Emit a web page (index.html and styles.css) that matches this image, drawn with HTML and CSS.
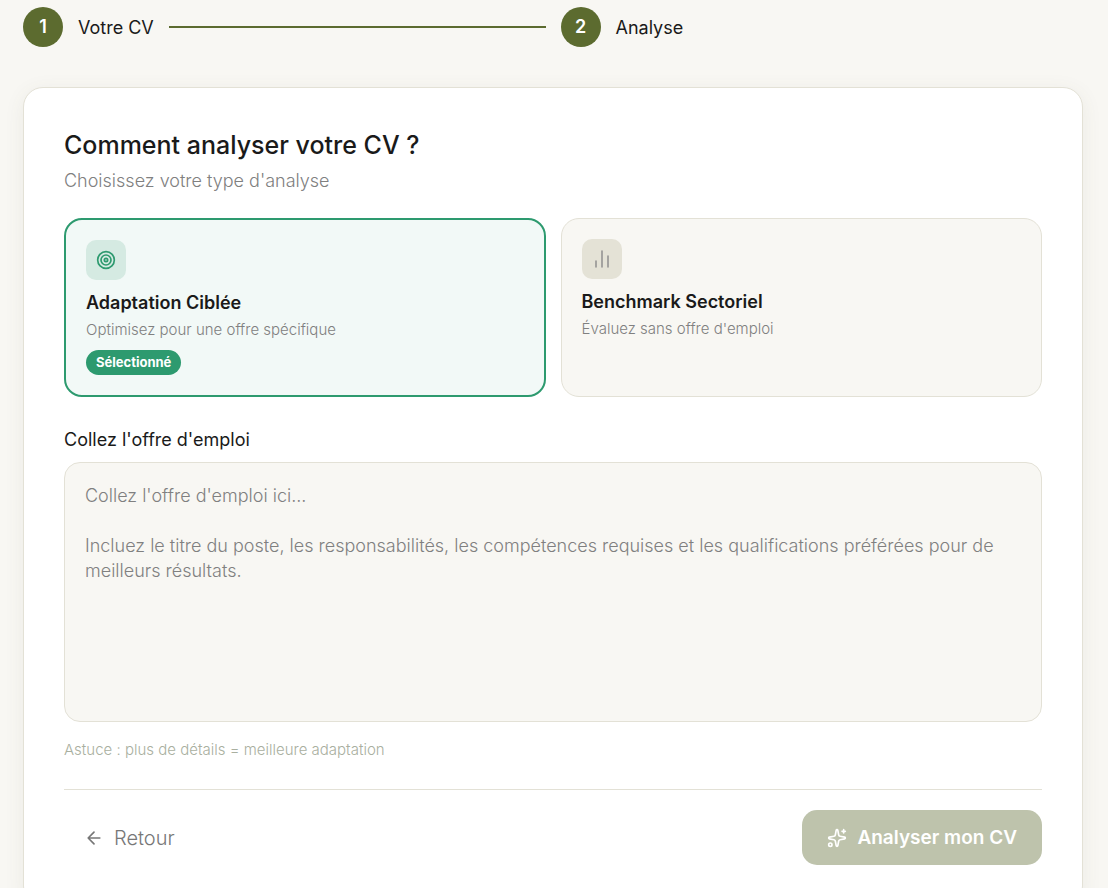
FILE: index.html
```html
<!DOCTYPE html>
<html lang="fr">
<head>
    <meta charset="UTF-8">
    <meta name="viewport" content="width=device-width, initial-scale=1.0"/>
    <title>Analyse de CV</title>
    <link rel="stylesheet" href="styles.css">
</head>
<body>
<main class="page">
    <ol class="steps">
        <li class="step">
            <span class="stepNum">1</span>
            <span>Votre CV</span>
            <i class="stepLine"></i>
        </li>
        <li class="step">
            <span class="stepNum">2</span>
            <span>Analyse</span>
        </li>
    </ol>

    <form class="panel">
        <h1>Comment analyser votre CV ?</h1>
        <p class="subtitle">Choisissez votre type d'analyse</p>

        <div class="modes">
            <button type="button" class="mode selected" aria-pressed="true">
                <span class="modeIcon">
                    <svg width="20" height="20" viewBox="0 0 24 24">
                        <circle cx="12" cy="12" r="10"/>
                        <circle cx="12" cy="12" r="6"/>
                        <circle cx="12" cy="12" r="2"/>
                    </svg>
                </span>
                <span class="modeTitle">Adaptation Ciblée</span>
                <span class="modeText">Optimisez pour une offre spécifique</span>
                <span class="badge">Sélectionné</span>
            </button>
            <button type="button" class="mode" aria-pressed="false">
                <span class="modeIcon">
                    <svg class="chart" width="24" height="24" viewBox="0 0 24 24">
                        <path d="M6 20v-6M12 20V4M18 20V9"/>
                    </svg>
                </span>
                <span class="modeTitle">Benchmark Sectoriel</span>
                <span class="modeText">Évaluez sans offre d'emploi</span>
            </button>
        </div>

        <label class="label" for="offer">Collez l'offre d'emploi</label>
        <textarea id="offer" class="offer" placeholder="Collez l'offre d'emploi ici...&#10;&#10;Incluez le titre du poste, les responsabilités, les compétences requises et les qualifications préférées pour de meilleurs résultats."></textarea>
        <p class="hint">Astuce : plus de détails = meilleure adaptation</p>

        <div class="actions">
            <button type="button" class="btn back">
                <svg width="20" height="20" viewBox="0 0 24 24">
                    <path d="m12 19-7-7 7-7M19 12H5"/>
                </svg>
                Retour
            </button>
            <button type="submit" class="btn submit" disabled>
                <svg width="20" height="20" viewBox="0 0 24 24">
                    <path d="M11.017 2.814a1 1 0 0 1 1.966 0l1.051 5.558a2 2 0 0 0 1.594 1.594l5.558 1.051a1 1 0 0 1 0 1.966l-5.558 1.051a2 2 0 0 0-1.594 1.594l-1.051 5.558a1 1 0 0 1-1.966 0l-1.051-5.558a2 2 0 0 0-1.594-1.594l-5.558-1.051a1 1 0 0 1 0-1.966l5.558-1.051a2 2 0 0 0 1.594-1.594z"/>
                    <path d="M20 2v4M22 4h-4"/>
                    <circle cx="4" cy="20" r="2"/>
                </svg>
                Analyser mon CV
            </button>
        </div>
    </form>
</main>
</body>
</html>
```
FILE: styles.css
```css
* {
    margin: 0;
    padding: 0;
    box-sizing: border-box;
}

body {
    background: #f8f7f3;
    color: #1a1a1a;
    font-family: Inter, "Liberation Sans", sans-serif;
    font-size: 18px;
    line-height: 25px;
}

button, textarea {
    font-family: inherit;
    color: inherit;
}

svg {
    flex: none;
    fill: none;
    stroke: currentColor;
    stroke-width: 2;
    stroke-linecap: round;
    stroke-linejoin: round;
}

.page {
    padding: 7px 25px 40px 23px;
}

/* steps */
.steps {
    display: grid;
    grid-template-columns: 1fr 1fr;
    gap: 15px;
    margin-bottom: 40px;
    list-style: none;
}

.step {
    display: flex;
    align-items: center;
    gap: 15px;
}

.stepNum {
    width: 40px;
    height: 40px;
    border-radius: 50%;
    background: #5c6b2f;
    color: #fff;
    font-weight: 600;
    line-height: 40px;
    text-align: center;
}

.stepLine {
    flex: 1;
    height: 2px;
    background: #5c6b2f;
}

/* panel */
.panel {
    padding: 40px;
    border: 1px solid #e3e1d6;
    border-radius: 20px;
    background: #fff;
    box-shadow: 0 4px 20px rgba(92, 92, 70, 0.08);
}

h1 {
    margin-bottom: 5px;
    font-size: 25px;
    font-weight: 500;
    line-height: 35px;
}

.subtitle {
    margin-bottom: 25px;
    color: #808080;
    font-weight: 300;
}

.modes {
    display: grid;
    grid-template-columns: 1fr 1fr;
    gap: 15px;
    margin-bottom: 30px;
}

.mode {
    display: flex;
    flex-direction: column;
    align-items: flex-start;
    padding: 20px;
    border: 1px solid #e3e1d6;
    border-radius: 18px;
    background: #f8f7f3;
    text-align: left;
    cursor: pointer;
}

.mode.selected {
    border: 2px solid #2d9a6f;
    background: #f2f9f7;
}

.modeIcon {
    display: flex;
    align-items: center;
    justify-content: center;
    width: 40px;
    height: 40px;
    margin-bottom: 10px;
    border-radius: 10px;
    background: #e4e2d6;
    color: #8f8f8f;
}

.selected .modeIcon {
    background: #d5eae2;
    color: #2d9a6f;
}

.chart {
    stroke-width: 1.5;
}

.modeTitle {
    margin-bottom: 3px;
    font-size: 18px;
    font-weight: 600;
    line-height: 26px;
}

.modeText {
    color: #808080;
    font-size: 15px;
    font-weight: 300;
    line-height: 22px;
}

.badge {
    margin-top: 9px;
    padding: 0 10px;
    border-radius: 13px;
    background: #2d9a6f;
    color: #fff;
    font-size: 13px;
    font-weight: 700;
    line-height: 25px;
}

.label {
    display: block;
    margin-bottom: 10px;
}

.offer {
    display: block;
    width: 100%;
    height: 260px;
    padding: 20px;
    border: 1px solid #e3e1d6;
    border-radius: 16px;
    outline: none;
    background: #f8f7f3;
    font-size: 18px;
    line-height: 25px;
    resize: none;
}

.offer::placeholder {
    color: #808080;
    font-weight: 300;
}

.hint {
    margin: 15px 0 27px;
    color: #a9afa0;
    font-size: 15px;
    font-weight: 300;
}

/* actions */
.actions {
    display: flex;
    justify-content: space-between;
    padding-top: 20px;
    border-top: 1px solid #e3e1d6;
}

.btn {
    display: flex;
    align-items: center;
    gap: 10px;
    height: 55px;
    border: none;
    border-radius: 15px;
    font-size: 20px;
}

.back {
    padding: 0 20px;
    background: none;
    color: #777;
    font-weight: 300;
    cursor: pointer;
}

.submit {
    padding: 0 25px;
    background: #bec3ac;
    color: #fff;
    font-size: 19px;
    font-weight: 600;
}
```
